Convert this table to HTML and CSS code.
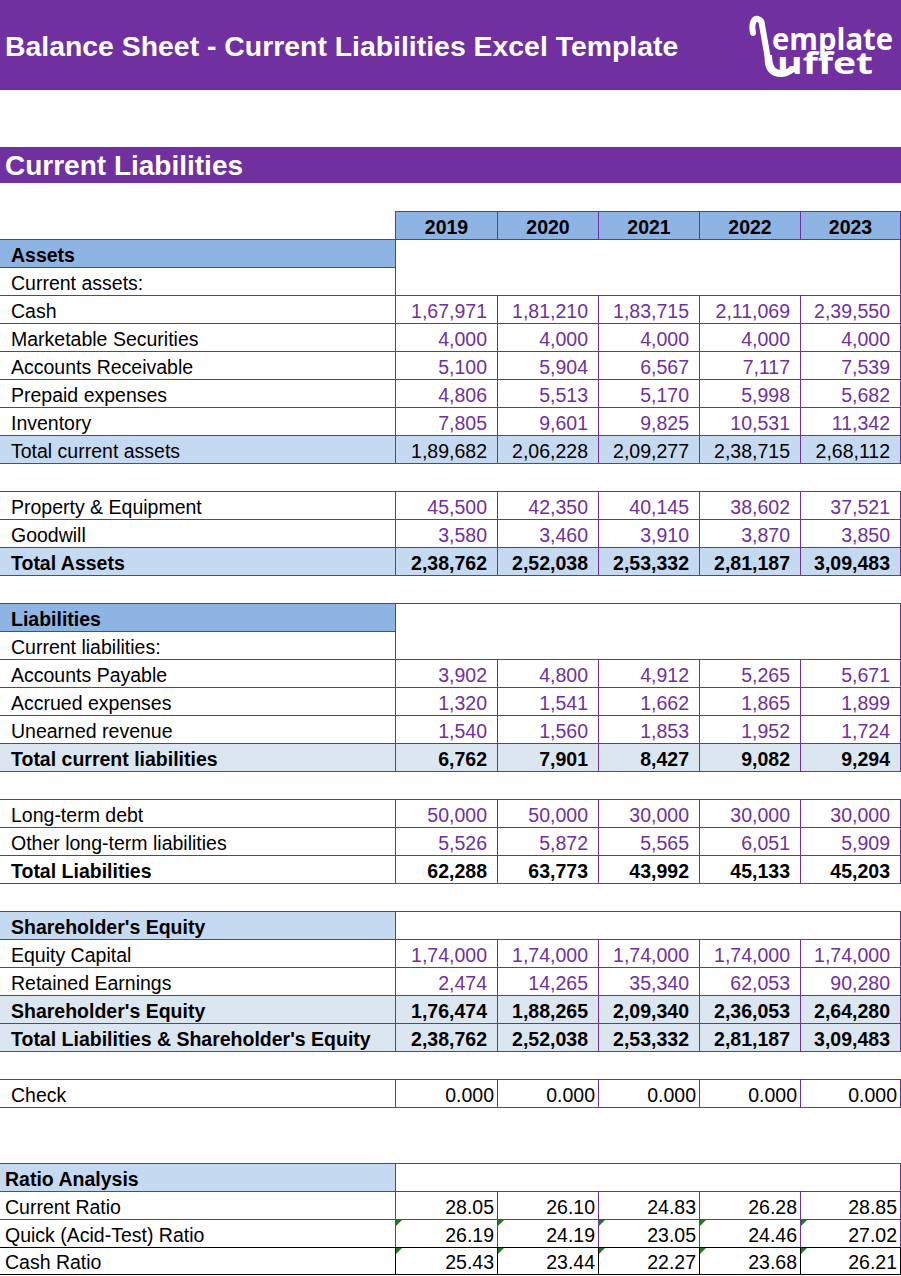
FILE: index.html
```html
<!DOCTYPE html>
<html>
<head>
<meta charset="utf-8">
<title>Balance Sheet - Current Liabilities Excel Template</title>
<link rel="stylesheet" href="styles.css">
</head>
<body>
<div class="page">
  <header class="banner">
    <h1 class="title">Balance Sheet - Current Liabilities Excel Template</h1>
    <svg class="logo" width="150" height="72" viewBox="0 0 150 72" aria-label="Template Buffet">
      <path class="ladle" d="M8 24 C6 14 9 9 13 10 C16 11 17 13 17 16 L23 50" />
      <path class="bowl" d="M20 46 C18 61 26 68 36 68 C44 68 50 63 52 57 L45 57 C43 60 40 61 36 61 C30 61 27 56 27 46 Z" />
      <text class="lg1" x="27" y="41" textLength="121" lengthAdjust="spacingAndGlyphs">emplate</text>
      <text class="lg2" x="32" y="65" textLength="96" lengthAdjust="spacingAndGlyphs">uffet</text>
    </svg>
  </header>
  <div class="spacer-lg"></div>
  <div class="section">Current Liabilities</div>
  <div class="spacer"></div>

  <div class="sheet">
    <div class="lbl none"></div>
    <div class="v yr">2019</div><div class="v yr">2020</div><div class="v yr">2021</div><div class="v yr">2022</div><div class="v yr last">2023</div>

    <div class="lbl bold hd1">Assets</div>
    <div class="merge2"></div>
    <div class="lbl">Current assets:</div>

    <div class="lbl">Cash</div>
    <div class="v in">1,67,971</div><div class="v in">1,81,210</div><div class="v in">1,83,715</div><div class="v in">2,11,069</div><div class="v in last">2,39,550</div>
    <div class="lbl">Marketable Securities</div>
    <div class="v in">4,000</div><div class="v in">4,000</div><div class="v in">4,000</div><div class="v in">4,000</div><div class="v in last">4,000</div>
    <div class="lbl">Accounts Receivable</div>
    <div class="v in">5,100</div><div class="v in">5,904</div><div class="v in">6,567</div><div class="v in">7,117</div><div class="v in last">7,539</div>
    <div class="lbl">Prepaid expenses</div>
    <div class="v in">4,806</div><div class="v in">5,513</div><div class="v in">5,170</div><div class="v in">5,998</div><div class="v in last">5,682</div>
    <div class="lbl">Inventory</div>
    <div class="v in">7,805</div><div class="v in">9,601</div><div class="v in">9,825</div><div class="v in">10,531</div><div class="v in last">11,342</div>
    <div class="lbl tot1">Total current assets</div>
    <div class="v tot1">1,89,682</div><div class="v tot1">2,06,228</div><div class="v tot1">2,09,277</div><div class="v tot1">2,38,715</div><div class="v tot1 last">2,68,112</div>

    <div class="blank top"></div>

    <div class="lbl">Property &amp; Equipment</div>
    <div class="v in">45,500</div><div class="v in">42,350</div><div class="v in">40,145</div><div class="v in">38,602</div><div class="v in last">37,521</div>
    <div class="lbl">Goodwill</div>
    <div class="v in">3,580</div><div class="v in">3,460</div><div class="v in">3,910</div><div class="v in">3,870</div><div class="v in last">3,850</div>
    <div class="lbl bold tot1">Total Assets</div>
    <div class="v bold tot1">2,38,762</div><div class="v bold tot1">2,52,038</div><div class="v bold tot1">2,53,332</div><div class="v bold tot1">2,81,187</div><div class="v bold tot1 last">3,09,483</div>

    <div class="blank top"></div>

    <div class="lbl bold hd1">Liabilities</div>
    <div class="merge2"></div>
    <div class="lbl">Current liabilities:</div>

    <div class="lbl">Accounts Payable</div>
    <div class="v in">3,902</div><div class="v in">4,800</div><div class="v in">4,912</div><div class="v in">5,265</div><div class="v in last">5,671</div>
    <div class="lbl">Accrued expenses</div>
    <div class="v in">1,320</div><div class="v in">1,541</div><div class="v in">1,662</div><div class="v in">1,865</div><div class="v in last">1,899</div>
    <div class="lbl">Unearned revenue</div>
    <div class="v in">1,540</div><div class="v in">1,560</div><div class="v in">1,853</div><div class="v in">1,952</div><div class="v in last">1,724</div>
    <div class="lbl bold tot2">Total current liabilities</div>
    <div class="v bold tot2">6,762</div><div class="v bold tot2">7,901</div><div class="v bold tot2">8,427</div><div class="v bold tot2">9,082</div><div class="v bold tot2 last">9,294</div>

    <div class="blank top"></div>

    <div class="lbl">Long-term debt</div>
    <div class="v in">50,000</div><div class="v in">50,000</div><div class="v in">30,000</div><div class="v in">30,000</div><div class="v in last">30,000</div>
    <div class="lbl">Other long-term liabilities</div>
    <div class="v in">5,526</div><div class="v in">5,872</div><div class="v in">5,565</div><div class="v in">6,051</div><div class="v in last">5,909</div>
    <div class="lbl bold">Total Liabilities</div>
    <div class="v bold">62,288</div><div class="v bold">63,773</div><div class="v bold">43,992</div><div class="v bold">45,133</div><div class="v bold last">45,203</div>

    <div class="blank top"></div>

    <div class="lbl bold tot1">Shareholder's Equity</div>
    <div class="merge1"></div>
    <div class="lbl">Equity Capital</div>
    <div class="v in">1,74,000</div><div class="v in">1,74,000</div><div class="v in">1,74,000</div><div class="v in">1,74,000</div><div class="v in last">1,74,000</div>
    <div class="lbl">Retained Earnings</div>
    <div class="v in">2,474</div><div class="v in">14,265</div><div class="v in">35,340</div><div class="v in">62,053</div><div class="v in last">90,280</div>
    <div class="lbl bold tot2">Shareholder's Equity</div>
    <div class="v bold tot2">1,76,474</div><div class="v bold tot2">1,88,265</div><div class="v bold tot2">2,09,340</div><div class="v bold tot2">2,36,053</div><div class="v bold tot2 last">2,64,280</div>
    <div class="lbl bold tot2">Total Liabilities &amp; Shareholder's Equity</div>
    <div class="v bold tot2">2,38,762</div><div class="v bold tot2">2,52,038</div><div class="v bold tot2">2,53,332</div><div class="v bold tot2">2,81,187</div><div class="v bold tot2 last">3,09,483</div>

    <div class="blank top"></div>

    <div class="lbl">Check</div>
    <div class="v tight">0.000</div><div class="v tight">0.000</div><div class="v tight">0.000</div><div class="v tight">0.000</div><div class="v tight last">0.000</div>

    <div class="blank top"></div>
    <div class="blank"></div>

    <div class="lbl bold tot1 flush">Ratio Analysis</div>
    <div class="merge1"></div>
    <div class="lbl flush">Current Ratio</div>
    <div class="v tight">28.05</div><div class="v tight">26.10</div><div class="v tight">24.83</div><div class="v tight">26.28</div><div class="v tight last">28.85</div>
    <div class="lbl flush">Quick (Acid-Test) Ratio</div>
    <div class="v tight flag">26.19</div><div class="v tight flag">24.19</div><div class="v tight flag">23.05</div><div class="v tight flag">24.46</div><div class="v tight flag last">27.02</div>
    <div class="lbl flush dark">Cash Ratio</div>
    <div class="v tight flag dark">25.43</div><div class="v tight flag dark">23.44</div><div class="v tight flag dark">22.27</div><div class="v tight flag dark">23.68</div><div class="v tight flag dark last">26.21</div>
  </div>
</div>
</body>
</html>
```

FILE: styles.css
```css
html, body {
  margin: 0;
  padding: 0;
  background: #ffffff;
}

body {
  font-family: "Liberation Sans", Arial, sans-serif;
  color: #000000;
}

.page {
  width: 901px;
}

.banner {
  height: 90px;
  background: #7030a0;
  display: flex;
  align-items: center;
  justify-content: space-between;
  padding: 0 6px 0 5px;
  box-sizing: border-box;
}

.title {
  margin: 0;
  padding-top: 3px;
  color: #ffffff;
  font-size: 28.4px;
  font-weight: bold;
  line-height: 1;
}

.logo {
  display: block;
  overflow: visible;
}

.ladle {
  fill: none;
  stroke: #ffffff;
  stroke-width: 6;
  stroke-linecap: round;
  stroke-linejoin: round;
}

.bowl {
  fill: #ffffff;
}

.lg1, .lg2 {
  fill: #ffffff;
  font-family: "Open Sans", "Noto Sans", sans-serif;
  font-weight: 700;
  font-size: 31px;
}

.spacer-lg {
  height: 57px;
}

.section {
  height: 36px;
  box-sizing: border-box;
  padding-top: 2px;
  background: #7030a0;
  color: #ffffff;
  font-size: 28px;
  font-weight: bold;
  padding-left: 5px;
  display: flex;
  align-items: center;
}

.spacer {
  height: 28px;
}

.sheet {
  display: grid;
  grid-template-columns: 395px 102px 101px 101px 101px 101px;
  grid-auto-rows: 28px;
  font-size: 19.5px;
}

.sheet > div {
  box-sizing: border-box;
  display: flex;
  align-items: center;
  padding-top: 3px;
  white-space: nowrap;
  overflow: hidden;
}

.lbl {
  grid-column: 1;
  padding-left: 11px;
  border-top: 1px solid #7030a0;
}

.lbl.none {
  border-top: none;
}

.lbl.flush {
  padding-left: 5px;
}

.v {
  justify-content: flex-end;
  padding-right: 10px;
  border-top: 1px solid #7030a0;
  border-left: 1px solid #7030a0;
}

.v.last {
  border-right: 1px solid #7030a0;
}

.v.tight {
  padding-right: 3px;
}

.yr {
  justify-content: center;
  padding-right: 0;
  font-weight: bold;
  background: #8db4e2;
}

.in {
  color: #7030a0;
}

.bold {
  font-weight: bold;
}

.hd1 {
  background: #8db4e2;
}

.tot1 {
  background: #c5d9f1;
}

.tot2 {
  background: #dce6f1;
}

.merge2 {
  grid-column: 2 / 7;
  grid-row: span 2;
  border-top: 1px solid #7030a0;
  border-left: 1px solid #7030a0;
  border-right: 1px solid #7030a0;
}

.merge1 {
  grid-column: 2 / 7;
  border-top: 1px solid #7030a0;
  border-left: 1px solid #7030a0;
  border-right: 1px solid #7030a0;
}

.blank {
  grid-column: 1 / -1;
}

.blank.top {
  border-top: 1px solid #7030a0;
}

.flag {
  position: relative;
}

.flag::before {
  content: "";
  position: absolute;
  left: 0;
  top: 0;
  width: 0;
  height: 0;
  border-top: 6px solid #1f7a1f;
  border-right: 6px solid transparent;
}

.sheet > .dark {
  border-top-color: #000000;
  border-bottom: 1px solid #000000;
}

.v.dark {
  border-left-color: #000000;
}

.v.dark.last {
  border-right-color: #000000;
}
```
